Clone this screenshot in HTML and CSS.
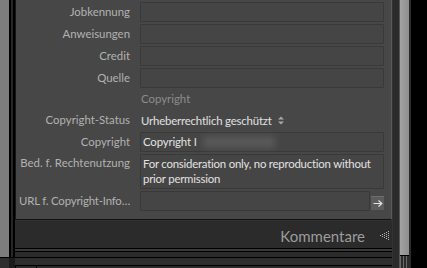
FILE: index.html
```html
<!DOCTYPE html>
<html lang="de">
<head>
    <meta charset="UTF-8">
    <title>Metadaten</title>
    <link rel="stylesheet" href="styles.css">
</head>
<body>
    <div class="app">
        <div class="side-left">
            <div class="side-left-top"></div>
            <div class="side-left-bottom"></div>
        </div>

        <div class="main">
            <div class="panel">
                <div class="form">
                    <label class="label">Jobkennung</label>
                    <div class="field"></div>

                    <label class="label">Anweisungen</label>
                    <div class="field"></div>

                    <label class="label">Credit</label>
                    <div class="field"></div>

                    <label class="label">Quelle</label>
                    <div class="field"></div>

                    <div></div>
                    <div class="group-title">Copyright</div>

                    <label class="label">Copyright-Status</label>
                    <div class="popup">
                        Urheberrechtlich geschützt
                        <svg class="popup-arrows" width="6" height="9" viewBox="0 0 6 9">
                            <path d="M0 3.5 L3 0.5 L6 3.5 Z M0 5.5 L3 8.5 L6 5.5 Z" fill="#a8a8a8"/>
                        </svg>
                    </div>

                    <label class="label">Copyright</label>
                    <div class="field field-text">Copyright I<span class="redacted"></span></div>

                    <label class="label label-top">Bed. f. Rechtenutzung</label>
                    <div class="field field-area">For consideration only, no reproduction without prior permission</div>

                    <label class="label label-tight">URL f. Copyright-Info…</label>
                    <div class="url-row">
                        <div class="field url-field"></div>
                        <button class="go-btn" type="button">
                            <svg width="10" height="7" viewBox="0 0 10 7">
                                <path d="M0.5 3.5 H8.5 M5.5 0.5 L8.8 3.5 L5.5 6.5" stroke="#e4e4e4" stroke-width="1.2" fill="none"/>
                            </svg>
                        </button>
                    </div>
                </div>
            </div>

            <div class="section-head">
                <span class="section-title">Kommentare</span>
                <svg class="section-toggle" width="10" height="11" viewBox="0 0 10 11">
                    <g fill="#b4b4b4">
                        <rect x="0" y="5" width="1" height="1"/>
                        <rect x="2" y="4" width="1" height="1"/><rect x="2" y="6" width="1" height="1"/>
                        <rect x="4" y="3" width="1" height="1"/><rect x="4" y="5" width="1" height="1"/><rect x="4" y="7" width="1" height="1"/>
                        <rect x="6" y="2" width="1" height="1"/><rect x="6" y="4" width="1" height="1"/><rect x="6" y="6" width="1" height="1"/><rect x="6" y="8" width="1" height="1"/>
                        <rect x="8" y="1" width="1" height="1"/><rect x="8" y="3" width="1" height="1"/><rect x="8" y="5" width="1" height="1"/><rect x="8" y="7" width="1" height="1"/><rect x="8" y="9" width="1" height="1"/>
                    </g>
                </svg>
            </div>

            <div class="strip strip-a"></div>
            <div class="strip strip-b"></div>
            <div class="strip strip-c"></div>
        </div>

        <div class="scroll">
            <div class="scroll-track">
                <div class="scroll-thumb"></div>
                <div class="scroll-grip"></div>
            </div>
        </div>
    </div>
</body>
</html>
```

FILE: styles.css
```css
* {
    padding: 0;
    margin: 0;
    box-sizing: border-box;
}
body {
    background-color: #000000;
    font-family: 'Lato', 'Liberation Sans', sans-serif;
    width: 427px;
    height: 268px;
    overflow: hidden;
}
.app {
    display: flex;
    height: 268px;
}

/* left edge */
.side-left {
    width: 15px;
    display: flex;
    flex-direction: column;
}
.side-left-top {
    height: 257px;
    background: linear-gradient(to right, #7d7d7d 0 9px, #000 9px 11px, #262626 11px 13px, #000 13px 15px);
}
.side-left-bottom {
    flex: 1;
    border-top: 1px solid #000;
    background: linear-gradient(to right, #2e2e2e 0 9px, #1b1b1b 9px 15px);
}

/* main column */
.main {
    width: 377px;
    display: flex;
    flex-direction: column;
}
.panel {
    height: 220px;
    background-color: #474747;
    border-left: 1px solid #151515;
    border-right: 1px solid #5a5a5a;
    border-bottom: 1px solid #111111;
    padding-top: 2px;
}
.form {
    display: grid;
    grid-template-columns: 114px 244px;
    grid-template-rows: 20px 20px 20px 20px 18px 20px 20px 35px 20px;
    column-gap: 10px;
    row-gap: 2px;
    font-size: 11.4px;
}
.label {
    line-height: 19px;
    color: #b2b2b2;
    text-align: right;
    white-space: nowrap;
}
.label-top {
    line-height: 18px;
}
.label-tight {
    letter-spacing: -0.18px;
}
.field {
    background-color: #454545;
    border: 1px solid #393939;
    border-radius: 1px;
}
.field-text {
    line-height: 18px;
    color: #e2e2e2;
    padding: 0 2px;
    letter-spacing: -0.15px;
    display: flex;
    align-items: center;
}
.redacted {
    display: inline-block;
    width: 72px;
    height: 12px;
    margin-left: 6px;
    background-color: #585858;
    filter: blur(3px);
}
.field-area {
    line-height: 15px;
    color: #e2e2e2;
    padding: 1px 2px;
    letter-spacing: -0.22px;
}
.group-title {
    line-height: 18px;
    color: #8c8c8c;
    padding-left: 1px;
}
.popup {
    line-height: 19px;
    color: #e0e0e0;
    padding-left: 1px;
    letter-spacing: -0.18px;
    display: flex;
    align-items: center;
    gap: 6px;
}
.url-row {
    display: flex;
    align-items: flex-end;
    gap: 1px;
}
.url-field {
    width: 230px;
    height: 20px;
}
.go-btn {
    width: 13px;
    height: 14px;
    margin-bottom: 1px;
    border: none;
    border-top: 1px solid #6e6e6e;
    background-color: #5c5c5c;
    display: flex;
    align-items: center;
    justify-content: center;
}

/* collapsed section header */
.section-head {
    height: 28px;
    background-color: #2b2b2b;
    border-top: 1px solid #323232;
    display: flex;
    align-items: center;
    justify-content: flex-end;
    padding-right: 2px;
    gap: 15px;
}
.section-title {
    font-size: 15px;
    color: #9c9c9c;
    padding-top: 2px;
}
.section-toggle {
    margin-top: 1px;
}

.strip-a {
    height: 4px;
    background-color: #3a3a3a;
    border-top: 1px solid #000;
    border-bottom: 1px solid #000;
}
.strip-b {
    height: 14px;
    background: linear-gradient(#2b2b2b 0 5px, #000 5px 6px, #2e2e2e 6px 13px, #000 13px 14px);
}
.strip-c {
    flex: 1;
    background: linear-gradient(to right, #000 0 1px, #2a2a2a 1px 21px, #000 21px 22px, #2a2a2a 22px);
}

/* scrollbar */
.scroll {
    flex: 1;
    display: flex;
    background: linear-gradient(to right, #333 0 1px, #2b2b2b 1px 7px, #555 7px 8px, #000 8px 100%);
}
.scroll-track {
    margin-left: 8px;
    width: 11px;
    display: flex;
    flex-direction: column;
    background-color: #2b2b2b;
}
.scroll-thumb {
    width: 9px;
    height: 255px;
    background: linear-gradient(to right, #a2a2a2, #8e8e8e);
}
.scroll-grip {
    flex: 1;
    width: 9px;
    border-top: 1px solid #000;
    background: repeating-linear-gradient(to right, #6a6a6a 0 1px, #2b2b2b 1px 3px);
}
```
